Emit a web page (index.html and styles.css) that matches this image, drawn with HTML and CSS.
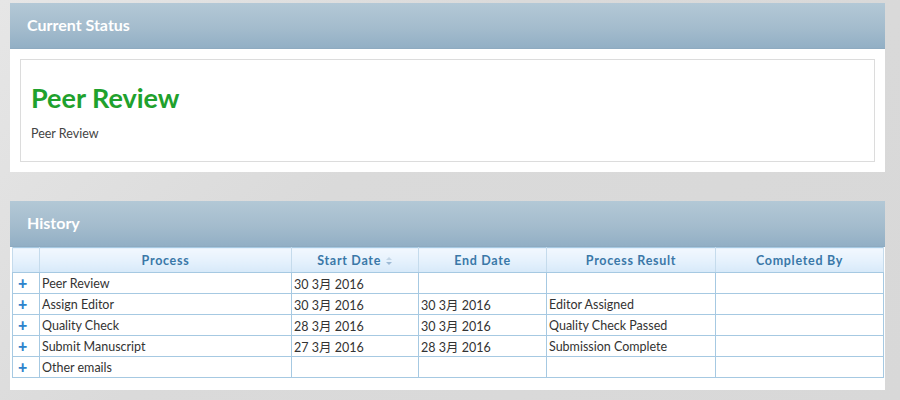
FILE: index.html
```html
<!DOCTYPE html>
<html>
<head>
<meta charset="utf-8">
<link rel="stylesheet" href="styles.css">
</head>
<body>
<div class="page">
  <section class="panel">
    <div class="panel-head">Current Status</div>
    <div class="panel-body status-body">
      <div class="status-box">
        <h1 class="status-title">Peer Review</h1>
        <p class="status-text">Peer Review</p>
      </div>
    </div>
  </section>
  <section class="panel history">
    <div class="panel-head">History</div>
    <div class="panel-body history-body">
      <table class="grid">
        <thead>
          <tr>
            <th class="c-plus"></th>
            <th class="c-proc">Process</th>
            <th class="c-start">Start Date <span class="sort"><svg width="8" height="10" viewBox="0 0 8 10"><path d="M1 4 L4 1 L7 4 Z" fill="#c4d6e6"/><path d="M1 6 L4 9 L7 6 Z" fill="#9dbad5"/></svg></span></th>
            <th class="c-end">End Date</th>
            <th class="c-res">Process Result</th>
            <th class="c-by">Completed By</th>
          </tr>
        </thead>
        <tbody>
          <tr><td class="plus">+</td><td>Peer Review</td><td>30 3月 2016</td><td></td><td></td><td></td></tr>
          <tr><td class="plus">+</td><td>Assign Editor</td><td>30 3月 2016</td><td>30 3月 2016</td><td>Editor Assigned</td><td></td></tr>
          <tr><td class="plus">+</td><td>Quality Check</td><td>28 3月 2016</td><td>30 3月 2016</td><td>Quality Check Passed</td><td></td></tr>
          <tr><td class="plus">+</td><td>Submit Manuscript</td><td>27 3月 2016</td><td>28 3月 2016</td><td>Submission Complete</td><td></td></tr>
          <tr><td class="plus">+</td><td>Other emails</td><td></td><td></td><td></td><td></td></tr>
        </tbody>
      </table>
    </div>
  </section>
</div>
</body>
</html>
```
FILE: styles.css
```css
html, body {
  margin: 0;
  padding: 0;
}
body {
  width: 900px;
  height: 400px;
  overflow: hidden;
  background: linear-gradient(135deg, #e6e6e6 0%, #dadada 40%, #d8d8d8 100%);
  font-family: Lato, "Noto Sans CJK SC", sans-serif;
  color: #333;
}
.page {
  padding: 3px 15px 0 10px;
  display: flex;
  flex-direction: column;
  gap: 29px;
}
.panel {
  background: #fff;
}
.panel-head {
  height: 46px;
  line-height: 44px;
  padding-left: 17px;
  color: #fff;
  font-weight: bold;
  font-size: 16px;
  background: linear-gradient(to bottom, #b3c8d6 0%, #a4bccd 55%, #92afc5 100%);
  border-bottom: 1px solid #8eaac0;
  box-sizing: border-box;
}
.status-body {
  padding: 10px;
}
.status-box {
  border: 1px solid #dcdcdc;
  height: 103px;
  box-sizing: border-box;
  padding: 22px 10px 0 10px;
}
.status-title {
  margin: 0;
  color: #1fa12d;
  font-size: 27px;
  line-height: 32px;
  font-weight: bold;
}
.status-text {
  margin: 12px 0 0 0;
  font-size: 12.5px;
  color: #444;
}
.history-body {
  padding: 0 1px 12px 2px;
}
.grid {
  width: 100%;
  border-collapse: collapse;
  table-layout: fixed;
  font-size: 12.5px;
  border: 1px solid #a6c9e2;
}
.grid th {
  height: 24px;
  padding: 0;
  font-weight: bold;
  color: #3a78a8;
  font-size: 12.5px;
  letter-spacing: 0.7px;
  background: linear-gradient(to bottom, #f2f8fe 0%, #e3f0fc 60%, #d7e9f9 100%);
  border-left: 1px solid #c5dbec;
  border-right: 1px solid #c5dbec;
  border-bottom: 1px solid #a6c9e2;
  text-align: center;
}
.grid td {
  height: 20px;
  padding: 0 0 0 2px;
  border: 1px solid #a6c9e2;
  color: #333;
  white-space: nowrap;
  overflow: hidden;
}
.grid td.plus {
  text-align: left;
  color: #2e83cc;
  font-weight: 900;
  font-size: 16px;
  line-height: 16px;
  padding: 0 0 0 5px;
}
.c-plus { width: 26px; }
.c-proc { width: 251px; }
.c-start { width: 126px; }
.c-end { width: 127px; }
.c-res { width: 168px; }
.sort {
  display: inline-block;
  vertical-align: middle;
}
.sort svg {
  display: block;
}
```
